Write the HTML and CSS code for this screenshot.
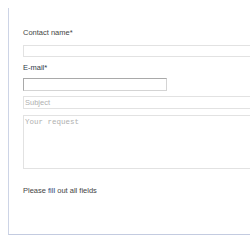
FILE: index.html
```html
<!DOCTYPE html>
<html>
<head>
<meta charset="utf-8">
<link rel="stylesheet" href="styles.css">
</head>
<body>
<div class="panel">
  <form class="form">
    <label class="label label-name">Contact name*</label>
    <input class="field field-wide" type="text">
    <label class="label label-mail">E-mail*</label>
    <input class="field field-mail" type="text">
    <input class="field field-wide field-subject" type="text" placeholder="Subject">
    <textarea class="field field-wide field-text" placeholder="Your request"></textarea>
    <p class="note">Please <span class="hl">fill</span> out all fields</p>
  </form>
</div>
</body>
</html>
```
FILE: styles.css
```css
html, body {
  margin: 0;
  padding: 0;
  background: #fff;
  overflow: hidden;
}
body {
  padding: 8px 0 0 8px;
  font-family: "Liberation Sans", Arial, sans-serif;
  font-size: 7.5px;
  color: #444;
}
.panel {
  width: 242px;
  height: 227px;
  overflow: hidden;
  border-left: 1px solid #cdd4e6;
  border-bottom: 1px solid #c3cbe0;
  box-sizing: border-box;
  padding: 20px 0 0 14px;
}
.form {
  display: flex;
  flex-direction: column;
  align-items: flex-start;
}
.label {
  display: block;
  line-height: 10px;
  height: 10px;
}
.label-name { margin-bottom: 7px; }
.label-mail { margin-top: 6px; margin-bottom: 5px; color: #2f3a4a; }
.field {
  box-sizing: border-box;
  margin: 0;
  padding: 0 1px;
  font-family: "Liberation Sans", Arial, sans-serif;
  font-size: 7.5px;
  background: #fff;
  outline: none;
}
.field-wide {
  width: 240px;
  height: 12px;
  border: 1px solid #e2e2e2;
}
.field-mail {
  width: 144px;
  height: 13px;
  border: 1px solid #a9a9a9;
  border-right-color: #d4d4d4;
  border-bottom-color: #d4d4d4;
}
.field-subject {
  height: 13px;
  margin-top: 5px;
}
.field-text {
  height: 54px;
  margin-top: 6px;
  resize: none;
  font-family: "Liberation Mono", monospace;
  padding: 2px 1px;
}
.field::placeholder { color: #b0b0b0; }
.note {
  margin: 17px 0 0 0;
  line-height: 10px;
}
.hl { color: #2a4a7a; }
```
